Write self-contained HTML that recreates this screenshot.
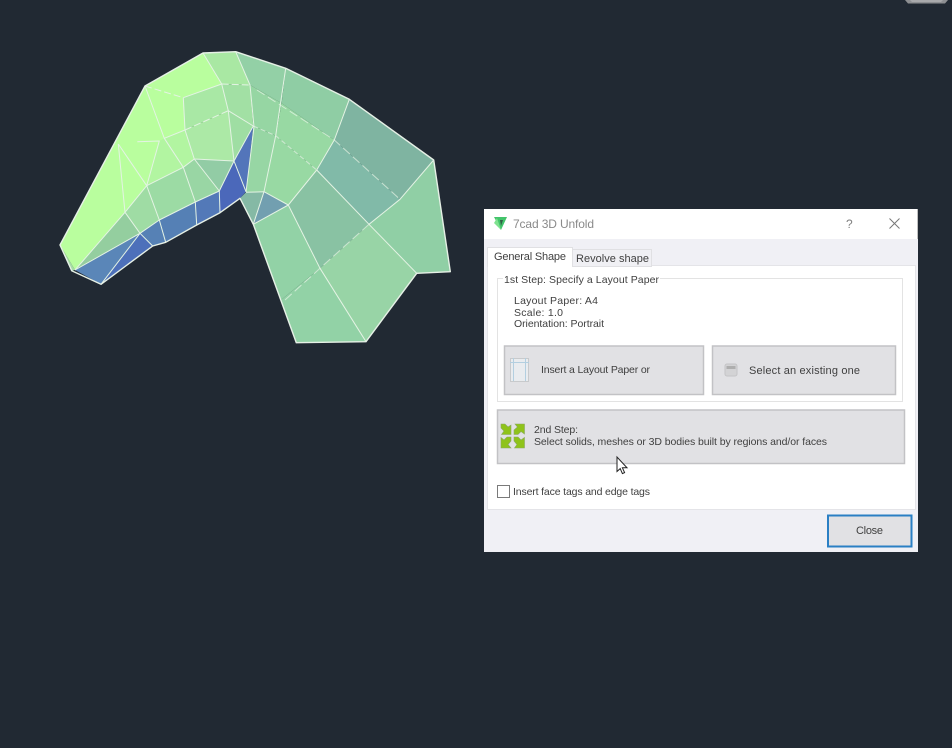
<!DOCTYPE html>
<html><head><meta charset="utf-8"><title>7cad 3D Unfold</title>
<style>
html,body{margin:0;padding:0;background:#212933;width:952px;height:748px;overflow:hidden}
svg{display:block}
text{font-family:"Liberation Sans",sans-serif;font-size:10.5px;fill:#404040}
</style></head><body>
<svg width="952" height="748" viewBox="0 0 952 748" xmlns="http://www.w3.org/2000/svg">
<defs><filter id="b" x="-5%" y="-5%" width="110%" height="110%"><feGaussianBlur stdDeviation="0.35"/></filter></defs>
<rect width="952" height="748" fill="#212933"/>
<path d="M905 0H948L945 3.5H908Z" fill="#8d8f92"/>
<path d="M910 0H943L941 2H912Z" fill="#a8a9ab"/>

<g filter="url(#b)">
<!-- mesh faces -->
<g stroke="none">
<polygon points="60,245 145,86 203,53 221.7,84 183.3,97.7 185,130 164.3,138.3 183.3,167.3 146.7,185.7 125,212.3 75,270" fill="#b9fe9e"/>
<polygon points="164.3,138.3 185,130 194.3,159 183.3,167.3 146.7,185.7 159.3,141" fill="#b2f5a1"/>
<polygon points="203,53 235.7,51.7 250,85 221.7,84" fill="#a9e8a3"/>
<polygon points="221.7,84 183.3,97.7 185,130 228.3,110.7" fill="#a9e8a5"/>
<polygon points="185,130 228.3,110.7 234,161 194.3,159" fill="#ace9a6"/>
<polygon points="221.7,84 250,85 253.3,126 228.3,110.7" fill="#a2e0a4"/>
<polygon points="228.3,110.7 253.3,126 234,161" fill="#9fdea3"/>
<polygon points="194.3,159 234,161 219.3,191" fill="#92cca5"/>
<polygon points="194.3,159 219.3,191 195.3,202 183.3,167.3" fill="#99d6a4"/>
<polygon points="183.3,167.3 195.3,202 159.3,220 146.7,185.7" fill="#9cdba4"/>
<polygon points="146.7,185.7 159.3,220 140,233.3 125,212.3" fill="#9fdca4"/>
<polygon points="125,212.3 140,233.3 75,270" fill="#94ce9f"/>
<polygon points="75,270 140,233.3 101,284.3" fill="#5a86b8"/>
<polygon points="140,233.3 152.7,246 101,284.3" fill="#4d6fba"/>
<polygon points="140,233.3 159.3,220 165.7,242.3 152.7,246" fill="#5781b5"/>
<polygon points="159.3,220 195.3,202 196.7,225 165.7,242.3" fill="#5480b5"/>
<polygon points="195.3,202 219.3,191 220,212.7 196.7,225" fill="#5279b8"/>
<polygon points="219.3,191 234,161 246,191.7 240,198.3 220,212.7" fill="#4c68ba"/>
<polygon points="234,161 253.3,126 246,191.7" fill="#5275ba"/>
<polygon points="60,245 75,270 71.7,270.7" fill="#a5dca5"/>

<polygon points="235.7,51.7 285.7,68.3 281.7,103.3 250,85" fill="#93d0a6"/>
<polygon points="285.7,68.3 349.3,99.3 334.3,140 281.7,103.3" fill="#8fcda4"/>
<polygon points="349.3,99.3 433.7,160 400,199.3 334.3,140" fill="#7fb4a1"/>
<polygon points="250,85 281.7,103.3 275.7,135.7 253.3,126" fill="#96d6a3"/>
<polygon points="281.7,103.3 334.3,140 316.7,170 275.7,135.7" fill="#98d9a3"/>
<polygon points="334.3,140 400,199.3 369,224.3 316.7,170" fill="#81baa8"/>
<polygon points="253.3,126 275.7,135.7 264,191.7 246,192.3" fill="#97d6a4"/>
<polygon points="275.7,135.7 316.7,170 288.3,205 264,191.7" fill="#98d9a3"/>
<polygon points="316.7,170 369,224.3 320,268.3 288.3,205" fill="#89c2a3"/>
<polygon points="433.7,160 450.3,271.7 416.7,273.3 369,224.3 400,199.3" fill="#90cfa5"/>
<polygon points="288.3,205 320,268.3 281,300 253.3,224.3" fill="#92d2a6"/>
<polygon points="369,224.3 416.7,273.3 366,341.7 320,268.3" fill="#98d4a6"/>
<polygon points="281,300 320,268.3 366,341.7 296.3,342.7" fill="#92d2a6"/>
<polygon points="253.3,224.3 264,191.7 288.3,205" fill="#729fb0"/>
<polygon points="240,198.3 246,192.3 264,191.7 253.3,224.3" fill="#85b9a5"/>
</g>

<!-- solid inner edges -->
<g fill="none" stroke="#e4f3e4" stroke-width="1" stroke-linejoin="round">
<path d="M203,53 221.7,84 228.3,110.7 234,161 246,191.7"/>
<path d="M235.7,51.7 250,85 254,127 246,192"/>
<path d="M183.3,97.7 221.7,84"/>
<path d="M183.3,97.7 185,130 194.3,159 234,161"/>
<path d="M145,86 164.3,138.3 183.3,167.3 195.3,202 196.7,225"/>
<path d="M137.3,141.7 159.3,141 146.7,185.7 159.3,220 165.7,242.3"/>
<path d="M164.3,138.3 185,130"/>
<path d="M118.3,144 125,212.3 140,233.3 152.7,246"/>
<path d="M118.3,144 146.7,185.7 183.3,167.3 194.3,159 219.3,191 220,212.7"/>
<path d="M146.7,185.7 125,212.3 75,270"/>
<path d="M75,270 140,233.3 101,284.3"/>
<path d="M228.3,110.7 253.3,126 234,161 219.3,191"/>
<path d="M285.7,68.3 275.7,135.7 264,191.7 253.3,224.3"/>
<path d="M349.3,99.3 334.3,140 316.7,170 288.3,205 253.3,224.3"/>
<path d="M316.7,170 369,224.3 416.7,273.3"/>
<path d="M288.3,205 264,191.7 246,192.3"/>
<path d="M288.3,205 320,268.3 366,341.7"/>
<path d="M433.7,160 400,199.3 369,224.3"/>
<path d="M140,233.3 159.3,220 195.3,202 219.3,191"/>
</g>
<!-- dashed edges -->
<g fill="none" stroke="#e4f3e4" stroke-width="1" stroke-dasharray="7 3">
<path d="M145,86 183.3,97.7"/>
<path d="M185,130 228.3,110.7"/>
<path d="M221.7,84 250,85"/>
<path d="M257,90 334.3,140 400,199.3" stroke-dasharray="9 4" stroke-opacity=".75"/>
<path d="M253.3,126 275.7,135.7 316.7,170" stroke-dasharray="5 3" stroke-opacity=".75"/>
<path d="M369,224.3 320,268.3 285,300" stroke-dasharray="9 4" stroke-opacity=".75"/>
</g>
<!-- outline -->
<path d="M60,245 145,86 203,53 235.7,51.7 285.7,68.3 349.3,99.3 433.7,160 450.3,271.7 416.7,273.3 366,341.7 296.3,342.7 253.3,224.3 240,198.3 220,212.7 196.7,225 165.7,242.3 152.7,246 101,284.3 71.7,270.7Z" fill="none" stroke="#e6f0e6" stroke-width="1.4" stroke-linejoin="round"/>
</g>

<!-- dialog -->
<rect x="484" y="209" width="434" height="343" fill="#f0f0f5"/>
<rect x="484" y="209" width="433" height="30" fill="#ffffff"/>
<rect x="917" y="209" width="1" height="30" fill="#c0c0c0"/>
<polygon points="494,217 507,217 501,230" fill="#43c46b"/>
<polygon points="497,218 501,230 494,223" fill="#7fe28f"/>
<polygon points="500,220 503,220 501,226" fill="#2f5f45"/>
<text x="513" y="228" style="font-size:12px;fill:#8a8a8a" textLength="81">7cad 3D Unfold</text>
<text x="846" y="228" style="font-size:12px;fill:#808080">?</text>
<path d="M889.5,218.5 899.5,228.5M899.5,218.5 889.5,228.5" stroke="#777" stroke-width="1" fill="none"/>

<!-- panel -->
<rect x="487.5" y="265.5" width="428" height="244" fill="#ffffff" stroke="#e4e4e8"/>
<rect x="572.5" y="249.5" width="79" height="17" fill="#f0f0f4" stroke="#e0e0e3"/>
<text x="576" y="262" style="font-size:11px" textLength="73">Revolve shape</text>
<rect x="487.5" y="247.5" width="85" height="19" fill="#ffffff" stroke="#e0e0e3"/>
<rect x="488" y="265" width="84" height="2" fill="#ffffff"/>
<text x="494" y="260" style="font-size:11px" textLength="72">General Shape</text>

<!-- group -->
<rect x="497.5" y="278.5" width="405" height="123" fill="none" stroke="#e3e3e3"/>
<rect x="503" y="274" width="157" height="10" fill="#ffffff"/>
<text x="504" y="283" textLength="155">1st Step: Specify a Layout Paper</text>
<text x="514" y="304" textLength="84">Layout  Paper:  A4</text>
<text x="514" y="316" textLength="49">Scale:  1.0</text>
<text x="514" y="327" textLength="90">Orientation:  Portrait</text>

<rect x="504.5" y="346" width="199" height="48.5" fill="#e1e1e4" stroke="#c2c2c5" stroke-width="1.5"/>
<rect x="510.5" y="358.5" width="18" height="23" fill="#e9ecef" stroke="#c8cacc"/>
<path d="M513.5,358V381M525.5,358V381M510,362.5H529" stroke="#b3cfe0" fill="none"/>
<text x="541" y="373" textLength="109">Insert a Layout Paper or</text>

<rect x="712.5" y="346" width="183" height="48.5" fill="#e1e1e4" stroke="#c2c2c5" stroke-width="1.5"/>
<rect x="725" y="364" width="12" height="12" rx="2" fill="#d3d3d5" stroke="#c4c4c6"/>
<rect x="726.5" y="366" width="9" height="3" fill="#aeaeae"/>
<text x="749" y="374" style="font-size:11px" textLength="111">Select an existing one</text>

<rect x="497.5" y="410" width="407" height="53.5" fill="#e1e1e4" stroke="#c2c2c5" stroke-width="1.5"/>
<g fill="#8fc31a" stroke="#8aa860" stroke-width=".6">
<polygon points="501,424 505,424 508,427 511,425 511,434.5 501.5,434.5 504,431 501,428"/>
<polygon points="514,434.5 518,434.5 521,431.5 524.5,434 524.5,424 515,424 517.5,427 514,430"/>
<polygon points="511,437 507,437 504,440 501,437.5 501,448 511,448 508,444.5 511,441"/>
<polygon points="514,437 518,437 521,440 524.5,437.5 524.5,448 514.5,448 517,444.5 514,441"/>
</g>
<text x="534" y="433" textLength="44">2nd Step:</text>
<text x="534" y="445" textLength="293">Select solids, meshes or 3D bodies built by regions and/or faces</text>

<rect x="497.5" y="485.5" width="12" height="12" fill="#fff" stroke="#7a7a7a"/>
<text x="513" y="495" textLength="137">Insert face tags and edge tags</text>

<rect x="828" y="515.5" width="83.5" height="31" fill="#e1e1e4" stroke="#2a7fc4" stroke-width="2"/>
<text x="856" y="534" style="font-size:11px" textLength="27">Close</text>

<!-- cursor -->
<path d="M617,457V471.5L620.2,468.6 622.4,473.6 624.6,472.6 622.4,467.8H627Z" fill="#ffffff" stroke="#222" stroke-width="1"/>
</svg>
</body></html>
